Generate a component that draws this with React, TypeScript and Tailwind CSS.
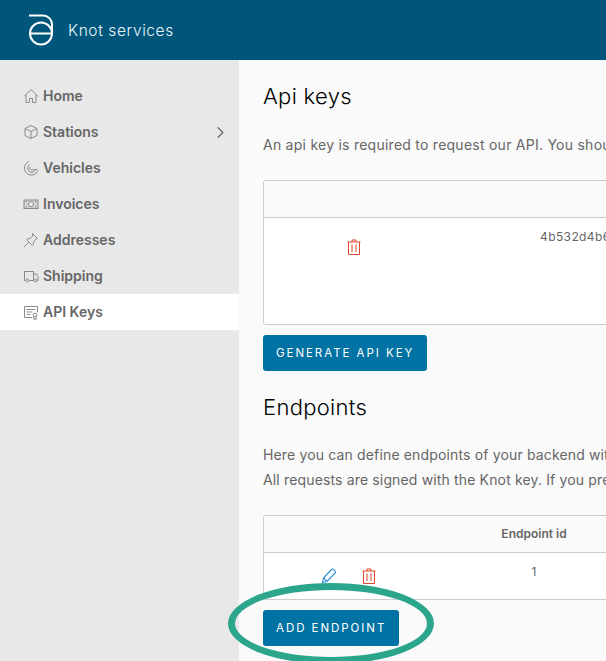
import { ChevronRight } from "lucide-react"

const gray = "#8a8a8a"

function HomeIcon() {
  return (
    <svg width="16" height="16" viewBox="0 0 16 16" fill="none" stroke={gray} strokeWidth="1">
      <path d="M1 8.500 8 1.500l7 7" />
      <path d="M3 7v7.500h3.500v-4h3v4H13V7" />
    </svg>
  )
}

function BoxIcon() {
  return (
    <svg width="16" height="16" viewBox="0 0 16 16" fill="none" stroke={gray} strokeWidth="1">
      <path d="M8 1.500 14 4.500v7l-6 3-6-3v-7z" />
      <path d="M2 4.500l6 3 6-3M8 7.500v7" />
    </svg>
  )
}

function VehiclesIcon() {
  return (
    <svg width="16" height="16" viewBox="0 0 16 16" fill="none" stroke={gray} strokeWidth="1">
      <path d="M6 1.500a7 7 0 1 0 9 9" />
      <path d="M6.500 4.500a4.300 4.300 0 1 0 6 6" />
      <path d="M7 7a2 2 0 0 0 2.500 2.800l5-.3" />
    </svg>
  )
}

function InvoicesIcon() {
  return (
    <svg width="16" height="16" viewBox="0 0 16 16" fill="none" stroke={gray} strokeWidth="1">
      <rect x="1" y="4" width="14" height="8.500" fill="#d4d4d4" />
      <circle cx="8" cy="8.200" r="2.600" fill="#e8e8e8" />
      <path d="M2.500 5.500h1.500M12 5.500h1.500M2.500 11h1.500M12 11h1.500" />
    </svg>
  )
}

function PinIcon() {
  return (
    <svg width="16" height="16" viewBox="0 0 16 16" fill="none" stroke={gray} strokeWidth="1">
      <path d="M9.500 1.500l5 5-1.500.5-2.500 3-.2 2.500-1 1L3.500 7.800l1-1 2.500-.2 2.500-2.500z" />
      <path d="M5.800 10.200.8 15.200" />
    </svg>
  )
}

function TruckIcon() {
  return (
    <svg width="16" height="16" viewBox="0 0 16 16" fill="none" stroke={gray} strokeWidth="1">
      <path d="M3 12.500H1.500v-9h9v9H6" />
      <path d="M10.500 6h3l1.500 2.500v4h-1.500M10.500 12.500H11" />
      <circle cx="4.500" cy="12.500" r="1.500" />
      <circle cx="12.500" cy="12.500" r="1.500" />
    </svg>
  )
}

function ApiKeysIcon() {
  return (
    <svg width="16" height="16" viewBox="0 0 16 16" fill="none" stroke={gray} strokeWidth="1">
      <path d="M9 13.500H1.500v-11h13V8.500" />
      <path d="M3.500 5.500h9M3.500 8h6M3.500 10.500h4" />
      <circle cx="12" cy="11" r="1.800" />
      <path d="M10.800 12.500v3l1.200-.8 1.200.8v-3" />
    </svg>
  )
}

function TrashIcon() {
  return (
    <svg width="14" height="16" viewBox="0 0 14 16" fill="none" stroke="#e0452e" strokeWidth="1">
      <path d="M.500 3h13M5 3V1h4v2" />
      <path d="M1.500 3v12.500h11V3" />
      <path d="M5 5.500v7.500M9 5.500v7.500" />
    </svg>
  )
}

function PencilIcon() {
  return (
    <svg width="16" height="16" viewBox="0 0 16 16" fill="none" stroke="#2f8fd0" strokeWidth="1.100">
      <path d="M1.500 14.500l1-4.500 8-8.500a1.500 1.500 0 0 1 2.200 0l1.300 1.300a1.500 1.500 0 0 1 0 2.200L6 13.500z" />
      <path d="M2.500 10 6 13.500" />
    </svg>
  )
}

function Logo() {
  return (
    <svg width="26" height="32" viewBox="0 0 26 32" fill="none" stroke="white" strokeWidth="2" className="mr-[14px]">
      <path d="M1 1.500h14a9 9 0 0 1 9 9v9" />
      <circle cx="13" cy="19.500" r="11" />
      <path d="M2 19.500h22" />
    </svg>
  )
}

const navItems = [
  { label: "Home", icon: <HomeIcon /> },
  { label: "Stations", icon: <BoxIcon />, chevron: true },
  { label: "Vehicles", icon: <VehiclesIcon /> },
  { label: "Invoices", icon: <InvoicesIcon /> },
  { label: "Addresses", icon: <PinIcon /> },
  { label: "Shipping", icon: <TruckIcon /> },
  { label: "API Keys", icon: <ApiKeysIcon />, active: true },
]

function Sidebar() {
  return (
    <aside className="w-[239px] shrink-0 bg-[#e8e8e8] pt-[18px]">
      {navItems.map((item) => (
        <div
          key={item.label}
          className={`flex h-9 items-center pl-[23px] pr-[9px] ${item.active ? "bg-white" : ""}`}
        >
          <span className="mr-[4px] flex w-4 justify-center">{item.icon}</span>
          <span className="mb-[2px] text-[14px] font-semibold text-[#666666]">{item.label}</span>
          {item.chevron && <ChevronRight size={19} strokeWidth={1.5} color="#666666" className="ml-auto" />}
        </div>
      ))}
    </aside>
  )
}

function Button({ children }: { children: string }) {
  return (
    <button className="block h-9 rounded-[3px] bg-[#0072a3] px-[13px] pt-[2px] text-[11.500px] uppercase tracking-[1.950px] text-white">
      {children}
    </button>
  )
}

export default function App() {
  return (
    <div className="relative h-[661px] w-[606px] overflow-hidden font-['Inter','Noto_Sans',sans-serif]">
      <header className="flex h-[60px] items-center bg-[#00567a] pl-[28px] text-[15.500px] font-light text-[#e8f4fa]">
        <Logo />
        <span className="mt-[2px] tracking-[0.6px]">Knot services</span>
      </header>

      <div className="flex h-[601px]">
        <Sidebar />

        <main className="min-w-0 flex-1 overflow-hidden bg-[#fafafa] pl-[24px] whitespace-nowrap">
          <h2 className="mt-[21px] text-[22px] leading-[30px] font-light tracking-[0.3px] text-black">Api keys</h2>
          <p className="mt-[22px] text-[14px] leading-[24px] tracking-[0.25px] text-[#666666]">
            An api key is required to request our API. You shou
          </p>

          <div className="mt-[23px] w-[600px] overflow-hidden rounded-[3px] border border-[#cccccc] bg-white">
            <div className="h-[37px] border-b border-[#cccccc] bg-[#fafafa]" />
            <div className="flex h-[106px]">
              <div className="flex w-[180px] justify-center pt-[21px]">
                <TrashIcon />
              </div>
              <div className="pt-[10px] pl-[96px] text-[12px] tracking-[0.4px] text-[#666666]">4b532d4b6</div>
            </div>
          </div>

          <div className="mt-[10px]">
            <Button>Generate API key</Button>
          </div>

          <h2 className="mt-[21px] text-[22px] leading-[30px] font-light tracking-[0.3px] text-black">Endpoints</h2>
          <p className="mt-[20px] text-[14px] leading-[25px] tracking-[0.15px] text-[#666666]">
            Here you can define endpoints of your backend wit
            <br />
            All requests are signed with the Knot key. If you pre
          </p>

          <div className="mt-[23px] w-[600px] overflow-hidden rounded-[3px] border border-[#cccccc] bg-white">
            <div className="flex h-[37px] items-center border-b border-[#cccccc] bg-[#fafafa]">
              <div className="w-[180px]" />
              <div className="w-[180px] text-center text-[12px] font-semibold text-[#666666]">Endpoint id</div>
            </div>
            <div className="flex h-[46px]">
              <div className="flex w-[180px] justify-center gap-[25px] pt-[15px] pr-[12px]">
                <PencilIcon />
                <TrashIcon />
              </div>
              <div className="w-[180px] pt-[10px] text-center text-[12px] text-[#666666]">1</div>
            </div>
          </div>

          <div className="mt-[10px]">
            <Button>Add endpoint</Button>
          </div>
        </main>
      </div>

      <div className="absolute top-[583px] left-[228px] h-[81px] w-[206px] rounded-[50%] border-[7px] border-[#2ca58d]" />
    </div>
  )
}
